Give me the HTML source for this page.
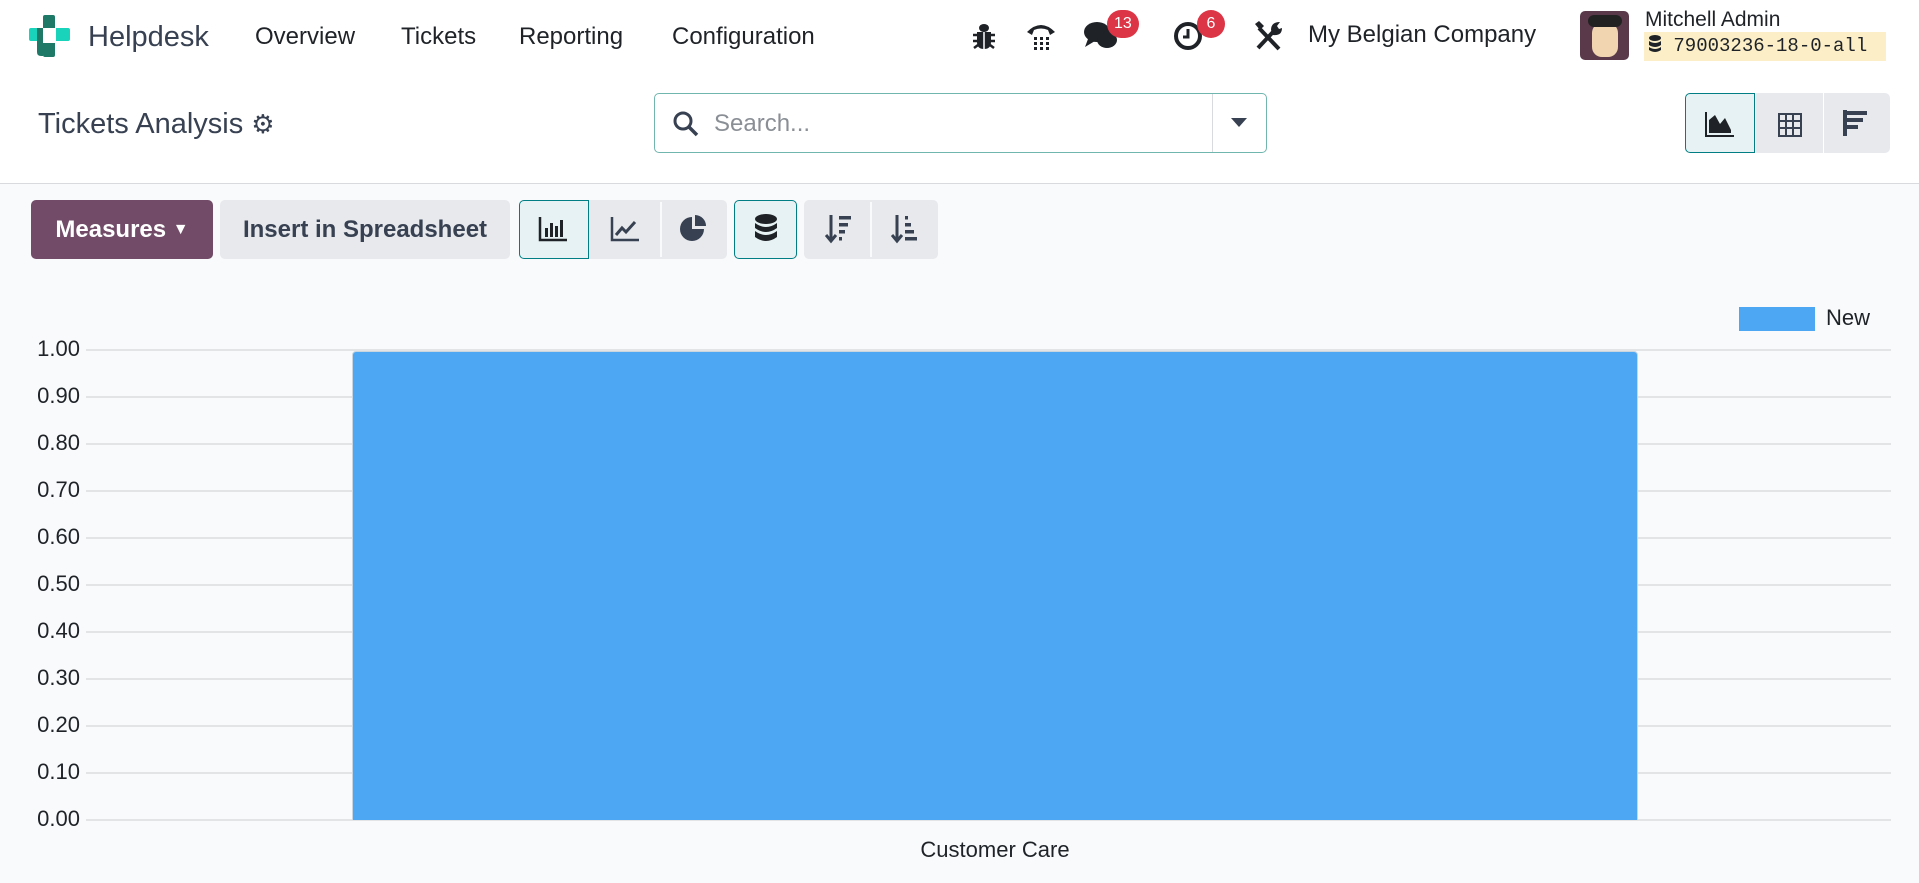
<!DOCTYPE html>
<html><head><meta charset="utf-8"><style>
*{box-sizing:border-box;margin:0;padding:0}
body{width:1919px;height:883px;overflow:hidden;background:#f9fafb;font-family:"Liberation Sans",sans-serif;color:#212529;position:relative}
.a{position:absolute}
.nav{left:0;top:0;width:1919px;height:73px;background:#fff}
.cp{left:0;top:73px;width:1919px;height:111px;background:#fff;border-bottom:1px solid #d8dadd}
.menu{font-size:24px;color:#1f2328;top:23px}
.btn{background:#e7e9ed;border-radius:5px;height:59px;top:200px;display:flex;align-items:center;justify-content:center;color:#374151}
.grid{left:86px;width:1805px;height:2px;background:#e3e4e6}
.yl{width:80px;text-align:right;font-size:22px;color:#1f2328;left:0}
.badge{background:#dc3545;color:#fff;border-radius:14px;font-size:16px;height:28px;min-width:28px;padding:0 7px;text-align:center;line-height:28px}
</style></head><body>
<div class="a nav"></div>
<svg class="a" style="left:29px;top:15px" width="41" height="42" viewBox="0 0 41 42"><path d="M14 2q0-2 2-2h8q2 0 2 2v11h-12z" fill="#1e7a67"/><path d="M0 15q0-2 2-2h11v13h-11q-2 0-2-2z" fill="#1ad3bb"/><path d="M27 13h12q2 0 2 2v9q0 2-2 2h-12z" fill="#1ad3bb"/><path d="M14 28h12v12q0 2-2 2h-8q-2 0-2-2z" fill="#1e7a67"/><path d="M8 13h6v28h-2q-4 0-4-4z" fill="#1e7a67"/></svg>
<div class="a" style="left:88px;top:21px;font-size:29px;color:#374151">Helpdesk</div>
<div class="a menu" style="left:255px">Overview</div>
<div class="a menu" style="left:401px">Tickets</div>
<div class="a menu" style="left:519px">Reporting</div>
<div class="a menu" style="left:672px">Configuration</div>
<svg class="a" style="left:972px;top:22px" width="24" height="28" viewBox="0 0 24 28"><g fill="#1f2328"><ellipse cx="12" cy="6" rx="5" ry="4"/><path d="M5 10h14v10q0 7-7 7t-7-7z"/></g><path d="M1 13h4M19 13h4M1 19h4M19 19h4M2 26l4-3M22 26l-4-3" stroke="#1f2328" stroke-width="2.5"/><path d="M12 10v17" stroke="#fff" stroke-width="1.5"/></svg>
<svg class="a" style="left:1024px;top:18px" width="34" height="34" viewBox="0 0 34 34"><path d="M3 14 Q17 0 31 14 L26 17 L24 12 Q17 9 10 12 L8 17Z" fill="#1f2328"/><g fill="#1f2328"><rect x="10" y="19" width="3" height="3"/><rect x="16" y="19" width="3" height="3"/><rect x="22" y="19" width="3" height="3"/><rect x="10" y="24" width="3" height="3"/><rect x="16" y="24" width="3" height="3"/><rect x="22" y="24" width="3" height="3"/><rect x="10" y="29" width="3" height="3"/><rect x="16" y="29" width="3" height="3"/><rect x="22" y="29" width="3" height="3"/></g></svg>
<svg class="a" style="left:1083px;top:20px" width="36" height="32" viewBox="0 0 36 32"><ellipse cx="14" cy="12" rx="13" ry="10" fill="#1f2328"/><path d="M5 19 L2 27 L12 21Z" fill="#1f2328"/><ellipse cx="24" cy="20" rx="10" ry="8" fill="#1f2328"/></svg>
<div class="a badge" style="left:1107px;top:10px">13</div>
<svg class="a" style="left:1172px;top:20px" width="32" height="32" viewBox="0 0 32 32"><circle cx="16" cy="16" r="12" fill="none" stroke="#1f2328" stroke-width="4"/><path d="M16 9v8h-5" stroke="#1f2328" stroke-width="3" fill="none"/></svg>
<div class="a badge" style="left:1197px;top:10px">6</div>
<svg class="a" style="left:1253px;top:20px" width="30" height="32" viewBox="0 0 30 32"><path d="M6 8 L26 29" stroke="#1f2328" stroke-width="4"/><path d="M2 4l4-3 5 5-4 4z" fill="#1f2328"/><path d="M5 28 L20 12" stroke="#1f2328" stroke-width="4"/><path d="M18 10q0-8 9-8l-3 4 2 3 3-1q0 8-9 7z" fill="#1f2328"/></svg>
<div class="a" style="left:1308px;top:21px;font-size:24px;color:#1f2328">My Belgian Company</div>
<div class="a" style="left:1580px;top:11px;width:49px;height:49px;border-radius:5px;background:#5a3a4a;overflow:hidden"><div class="a" style="left:12px;top:12px;width:26px;height:34px;border-radius:10px;background:#f0d5b0"></div><div class="a" style="left:8px;top:4px;width:34px;height:12px;border-radius:6px;background:#222"></div></div>
<div class="a" style="left:1645px;top:8px;font-size:21px;color:#1f2328">Mitchell Admin</div>
<div class="a" style="left:1644px;top:32px;width:242px;height:29px;background:#fcefc7;font-family:'Liberation Mono',monospace;font-size:19px;line-height:29px;padding-left:4px;color:#1f2328;white-space:nowrap;overflow:hidden"><svg width="14" height="18" viewBox="0 0 14 18" style="vertical-align:-2px"><g fill="#1f2328"><ellipse cx="7" cy="3" rx="6" ry="3"/><path d="M1 6q6 4 12 0v4q-6 4-12 0z"/><path d="M1 12q6 4 12 0v3q-6 4-12 0z"/></g></svg> 79003236-18-0-all</div>

<div class="a cp"></div>
<div class="a" style="left:38px;top:108px;font-size:29px;color:#374151">Tickets Analysis <span style="font-size:26px">⚙</span></div>
<div class="a" style="left:654px;top:93px;width:613px;height:60px;border:1px solid #71b6ae;border-radius:5px;background:#fff"></div>
<div class="a" style="left:1212px;top:94px;width:1px;height:58px;background:#d8dadd"></div>
<svg class="a" style="left:673px;top:111px" width="26" height="26" viewBox="0 0 26 26"><circle cx="10" cy="10" r="8" fill="none" stroke="#374151" stroke-width="3"/><path d="M16 16l8 8" stroke="#374151" stroke-width="3.5"/></svg>
<div class="a" style="left:714px;top:110px;font-size:24px;color:#8a8f96">Search...</div>
<div class="a" style="left:1231px;top:118px;width:0;height:0;border-left:8px solid transparent;border-right:8px solid transparent;border-top:9px solid #374151"></div>
<div class="a" style="left:1685px;top:93px;width:70px;height:60px;background:#e6f2f3;border:1px solid #017e84;border-radius:5px 0 0 5px"></div>
<svg class="a" style="left:1704px;top:110px" width="32" height="28" viewBox="0 0 32 28"><path d="M2 2v24h28" stroke="#1f2328" stroke-width="2" fill="none"/><path d="M5 23V10l6-5 5 9 5-6 6 12v3z" fill="#1f2328"/></svg>
<div class="a" style="left:1756px;top:93px;width:67px;height:60px;background:#e7e9ed"></div>
<svg class="a" style="left:1777px;top:110px" width="26" height="28" viewBox="0 0 26 28"><g fill="none" stroke="#374151" stroke-width="2"><rect x="2" y="4" width="22" height="22"/><path d="M2 11h22M2 18h22M9 4v22M16 4v22"/></g></svg>
<div class="a" style="left:1824px;top:93px;width:66px;height:60px;background:#e7e9ed;border-radius:0 5px 5px 0"></div>
<svg class="a" style="left:1843px;top:110px" width="26" height="26" viewBox="0 0 26 26"><g fill="#374151"><rect x="0" y="0" width="4" height="26"/><rect x="4" y="1" width="20" height="4"/><rect x="4" y="8" width="16" height="4"/><rect x="4" y="15" width="11" height="4"/></g></svg>

<div class="a btn" style="left:31px;width:182px;background:#714b67;color:#fff;font-size:24px;font-weight:bold">Measures&nbsp;<span style="font-size:16px">▼</span></div>
<div class="a btn" style="left:220px;width:290px;font-size:24px;font-weight:bold">Insert in Spreadsheet</div>
<div class="a btn" style="left:519px;width:208px"></div>
<div class="a btn" style="left:519px;width:70px;background:#e6f2f3;border:1px solid #017e84;border-radius:5px 0 0 5px"></div>
<div class="a" style="left:660px;top:202px;width:2px;height:55px;background:#f9fafb"></div>
<svg class="a" style="left:538px;top:216px" width="30" height="26" viewBox="0 0 30 26"><path d="M2 1v23h27" stroke="#1f2328" stroke-width="2.5" fill="none"/><g fill="#1f2328"><rect x="7" y="12" width="3" height="9"/><rect x="12" y="7" width="3" height="14"/><rect x="17" y="10" width="3" height="11"/><rect x="22" y="4" width="3" height="17"/></g></svg>
<svg class="a" style="left:610px;top:216px" width="30" height="26" viewBox="0 0 30 26"><path d="M2 1v23h27" stroke="#374151" stroke-width="2.5" fill="none"/><path d="M6 19l6-7 4 4 9-10" stroke="#374151" stroke-width="3" fill="none"/></svg>
<svg class="a" style="left:680px;top:214px" width="28" height="28" viewBox="0 0 28 28"><path d="M12 3a12 12 0 1 0 12 12H12z" fill="#374151"/><path d="M15 1v11h11A11 11 0 0 0 15 1z" fill="#374151"/></svg>
<div class="a btn" style="left:734px;width:63px;background:#e6f2f3;border:1px solid #017e84"></div>
<svg class="a" style="left:754px;top:214px" width="24" height="30" viewBox="0 0 24 30"><g fill="#1f2328"><ellipse cx="12" cy="5" rx="11" ry="5"/><path d="M1 9q11 8 22 0v5q-11 8-22 0z"/><path d="M1 17q11 8 22 0v6q-11 8-22 0z"/></g></svg>
<div class="a btn" style="left:804px;width:134px"></div>
<div class="a" style="left:870px;top:202px;width:2px;height:55px;background:#f9fafb"></div>
<svg class="a" style="left:825px;top:214px" width="28" height="30" viewBox="0 0 28 30"><path d="M6 1v25M1 21l5 6 5-6" stroke="#374151" stroke-width="3" fill="none"/><g fill="#374151"><rect x="14" y="2" width="12" height="3.5"/><rect x="14" y="9" width="9" height="3.5"/><rect x="14" y="16" width="6" height="3.5"/><rect x="14" y="23" width="3" height="3.5"/></g></svg>
<svg class="a" style="left:891px;top:214px" width="28" height="30" viewBox="0 0 28 30"><path d="M6 1v25M1 21l5 6 5-6" stroke="#374151" stroke-width="3" fill="none"/><g fill="#374151"><rect x="14" y="2" width="3" height="3.5"/><rect x="14" y="9" width="6" height="3.5"/><rect x="14" y="16" width="9" height="3.5"/><rect x="14" y="23" width="12" height="3.5"/></g></svg>

<div class="a" style="left:1739px;top:307px;width:76px;height:24px;background:#4ea7f2"></div>
<div class="a" style="left:1826px;top:305px;font-size:22px;color:#1f2328">New</div>

<div class="a grid" style="top:349px"></div><div class="a yl" style="top:336px">1.00</div>
<div class="a grid" style="top:396px"></div><div class="a yl" style="top:383px">0.90</div>
<div class="a grid" style="top:443px"></div><div class="a yl" style="top:430px">0.80</div>
<div class="a grid" style="top:490px"></div><div class="a yl" style="top:477px">0.70</div>
<div class="a grid" style="top:537px"></div><div class="a yl" style="top:524px">0.60</div>
<div class="a grid" style="top:584px"></div><div class="a yl" style="top:571px">0.50</div>
<div class="a grid" style="top:631px"></div><div class="a yl" style="top:618px">0.40</div>
<div class="a grid" style="top:678px"></div><div class="a yl" style="top:665px">0.30</div>
<div class="a grid" style="top:725px"></div><div class="a yl" style="top:712px">0.20</div>
<div class="a grid" style="top:772px"></div><div class="a yl" style="top:759px">0.10</div>
<div class="a grid" style="top:819px"></div><div class="a yl" style="top:806px">0.00</div>
<div class="a" style="left:352px;top:351px;width:1286px;height:469px;background:#4ea7f2;border:1px solid #c9d6e0;border-bottom:none;border-radius:4px 4px 0 0"></div>
<div class="a" style="left:845px;top:837px;width:300px;text-align:center;font-size:22px;color:#1f2328">Customer Care</div>
</body></html>
